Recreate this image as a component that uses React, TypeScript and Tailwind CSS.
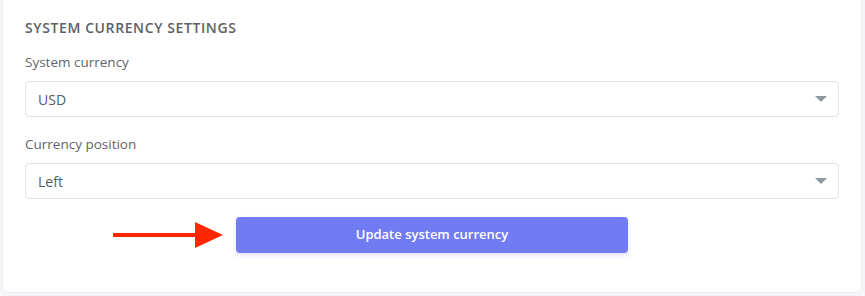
import React from 'react';

const font = { fontFamily: '"Open Sans", "Liberation Sans", sans-serif' };

function Caret() {
    return (
        <svg width="12" height="6" viewBox="0 0 12 6" className="shrink-0">
            <path d="M0 0 L12 0 L6 6 Z" fill="#8d989f" />
        </svg>
    );
}

function SelectBox({ value }: { value: string }) {
    return (
        <div className="h-9 flex items-center justify-between rounded border border-[#e3e3e6] bg-white pl-3 pr-[11px] text-[14px] text-[#555b63]">
            <span>{value}</span>
            <Caret />
        </div>
    );
}

function RedArrow() {
    return (
        <svg width="112" height="28" viewBox="0 0 112 28" className="shrink-0">
            <rect x="0" y="12" width="84" height="4" fill="#ff2600" />
            <path d="M82 1 L110 14 L82 27 Z" fill="#ff2600" />
        </svg>
    );
}

export default function App() {
    return (
        <div className="h-[296px] w-[865px] bg-[#f5f5f9] overflow-hidden" style={font}>
            <div className="ml-[2px] mr-[3px] h-[293px] bg-white rounded-b-md border-x border-b border-[#ececf2] px-[22px] pt-[18px]">
                <h2 className="text-[14px] leading-5 font-semibold uppercase text-[#5c6168] tracking-[0.6px]">
                    System currency settings
                </h2>

                <label className="block mt-[14px] text-[13.5px] leading-5 text-[#5f656d]">System currency</label>
                <div className="mt-[9px]">
                    <SelectBox value="USD" />
                </div>

                <label className="block mt-[17px] text-[13.5px] leading-5 text-[#5f656d]">Currency position</label>
                <div className="mt-[9px]">
                    <SelectBox value="Left" />
                </div>

                <div className="relative mt-[18px] flex justify-center">
                    <div className="absolute left-[88px] top-[4px]">
                        <RedArrow />
                    </div>
                    <button className="w-[392px] h-9 rounded bg-[#717cf3] text-white text-[13px] font-semibold shadow-[0_2px_4px_rgba(113,124,243,0.25)]">
                        Update system currency
                    </button>
                </div>
            </div>
        </div>
    );
}
